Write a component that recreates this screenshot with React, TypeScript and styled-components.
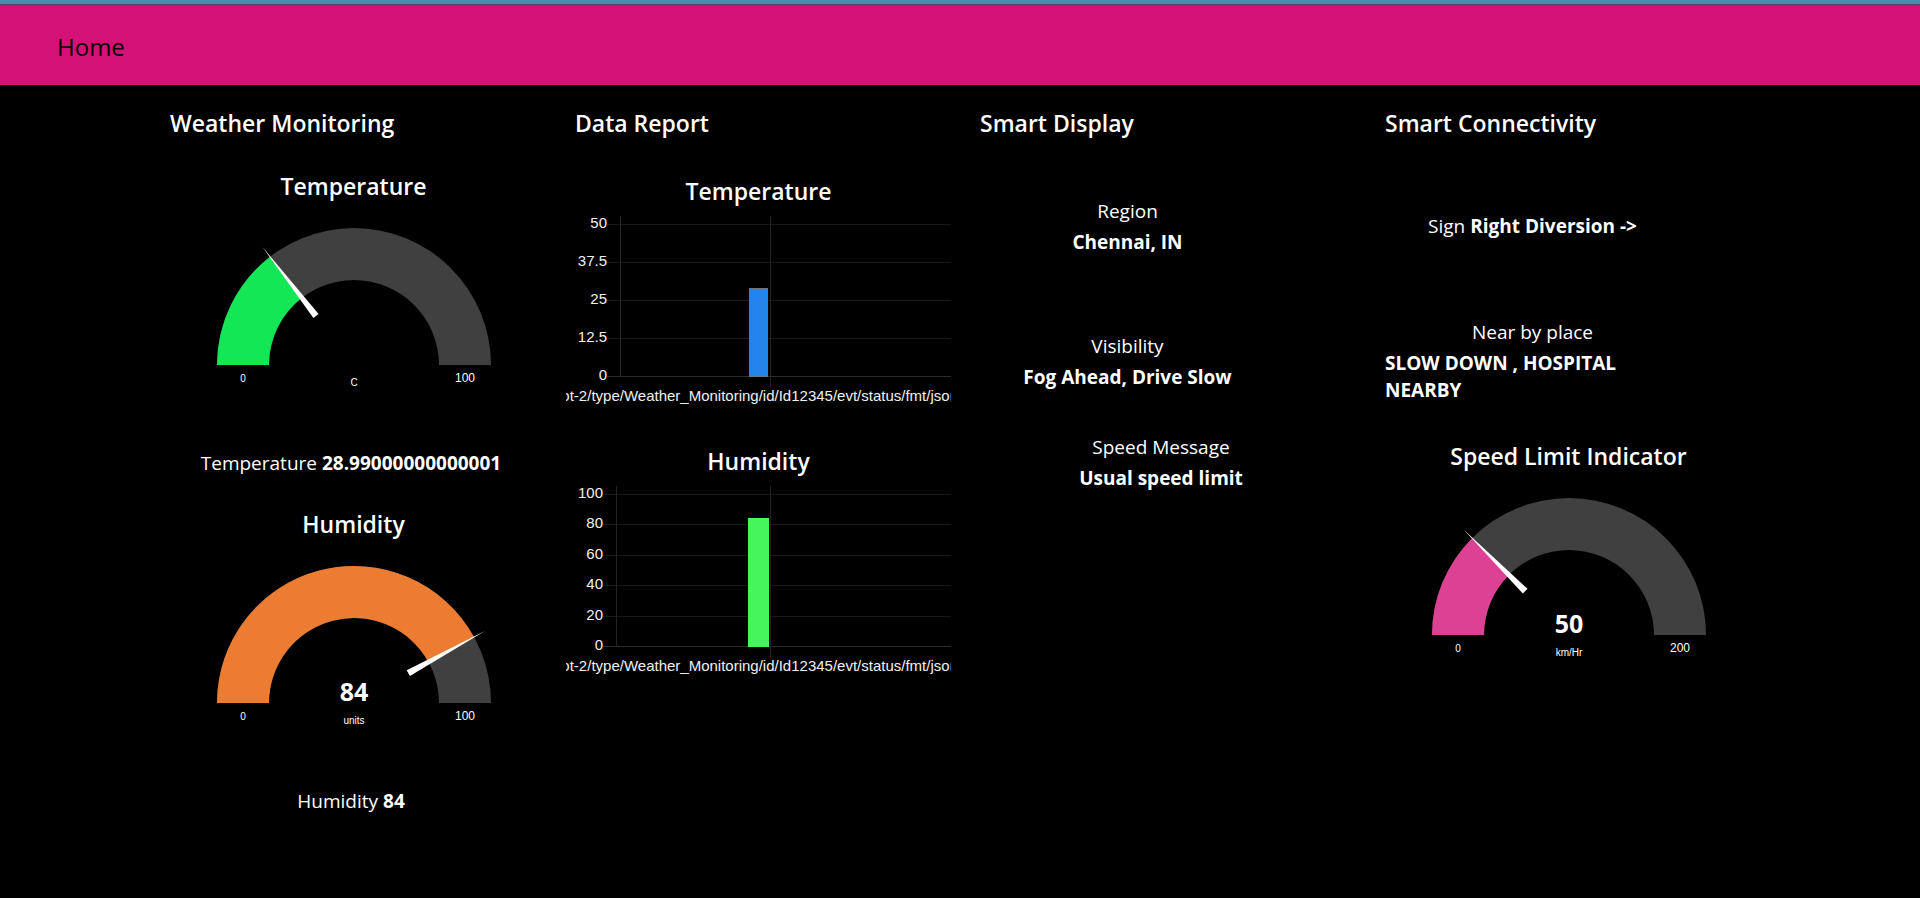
import React from "react";
import styled, { createGlobalStyle } from "styled-components";

const GlobalStyle = createGlobalStyle`
  * { box-sizing: border-box; }
  body {
    margin: 0;
    min-height: 100vh;
    background: #000;
    color: #fff;
    font-family: "Segoe UI", "Open Sans", "Noto Sans", sans-serif;
  }
`;

const Header = styled.header`
  display: flex;
  align-items: center;
  height: 85px;
  padding: 4px 57px 0;
  border-top: 4px solid #448fac;
  background: #d41177;
  box-shadow: inset 0 1px 0 #55485c;
`;

const PageTitle = styled.h1`
  margin: 0;
  color: #080006;
  font-size: 24px;
  font-weight: 400;
  line-height: 32px;
`;

const Main = styled.main`
  display: grid;
  grid-template-columns: repeat(4, minmax(0, 405px));
  justify-content: center;
  padding: 20px 0 24px 2px;
`;

const Column = styled.section`
  display: flex;
  flex-direction: column;
`;

const ColumnTitle = styled.h2`
  margin: 0 0 18px;
  padding-left: 19px;
  font-size: 23px;
  font-weight: 600;
  line-height: 36px;
`;

const Widget = styled.article<{ $rows: number }>`
  display: flex;
  flex-direction: column;
  align-items: center;
  height: ${(p) => Math.ceil(p.$rows * 67.5)}px;
`;

const WidgetTitle = styled.h3<{ $chart?: boolean }>`
  margin: ${(p) => (p.$chart ? "14px 0 0" : "9px 0 0")};
  font-size: 23px;
  font-weight: 600;
  line-height: 36px;
`;

const Reading = styled.dl<{ $rows: number; $narrow?: boolean; $inline?: boolean }>`
  display: flex;
  flex-direction: ${(p) => (p.$inline ? "row" : "column")};
  align-items: center;
  justify-content: center;
  gap: ${(p) => (p.$inline ? "5px" : "4px")};
  width: ${(p) => (p.$narrow ? "295px" : "362px")};
  height: ${(p) => Math.ceil(p.$rows * 67.5)}px;
  margin: 0 0 0 19px;
  font-size: 19px;
  line-height: 27px;
`;

const Label = styled.dt`
  font-weight: 400;
`;

const Value = styled.dd`
  margin: 0;
  font-weight: 700;
`;

const Drawing = styled.svg`
  display: block;
  flex: none;
  font-family: "Liberation Sans", Arial, sans-serif;
  fill: #fff;
`;

const BigValue = styled.text`
  font-family: "Segoe UI", "Open Sans", "Noto Sans", sans-serif;
  font-size: 25px;
  font-weight: 700;
`;

const SmallText = styled.text<{ $size: number }>`
  font-size: ${(p) => p.$size}px;
`;

const AxisText = styled.text`
  font-size: 15px;
  fill: #f0f0f0;
`;

const OUTER = 137;
const INNER = 85;

const ring = (from: number, to: number) => {
  const point = (radius: number, share: number) => {
    const a = Math.PI * share;
    return `${150 - radius * Math.cos(a)} ${150 - radius * Math.sin(a)}`;
  };
  return `M${point(OUTER, from)} A${OUTER} ${OUTER} 0 0 1 ${point(OUTER, to)} L${point(INNER, to)} A${INNER} ${INNER} 0 0 0 ${point(INNER, from)}Z`;
};

type GaugeProps = {
  title: string;
  share: number;
  max: number;
  color: string;
  unit: string;
  value?: string;
};

const Gauge = ({ title, share, max, color, unit, value }: GaugeProps) => (
  <Widget $rows={4}>
    <WidgetTitle>{title}</WidgetTitle>
    <Drawing width="300" height="185" viewBox="0 -11 300 185" role="img" aria-label={`${title} gauge`}>
      <path d={ring(0, 1)} fill="#404040" />
      <path d={ring(0, share)} fill={color} />
      <path d="M0.5 150 L88 146.7 L88 153.3Z" transform={`rotate(${share * 180} 150 150)`} />
      <SmallText $size={10} x="39" y="167" textAnchor="middle">0</SmallText>
      <SmallText $size={12} x="261" y="167" textAnchor="middle">{max}</SmallText>
      {value && <BigValue x="150" y="148" textAnchor="middle">{value}</BigValue>}
      <SmallText $size={10} x="150" y="171" textAnchor="middle">{unit}</SmallText>
    </Drawing>
  </Widget>
);

type ChartProps = {
  title: string;
  ticks: number[];
  left: number;
  bar: { x: number; width: number; height: number; fill: string; stroke: string };
};

const TOPIC = "iot-2/type/Weather_Monitoring/id/Id12345/evt/status/fmt/json";

const BarChart = ({ title, ticks, left, bar }: ChartProps) => {
  const step = 152 / (ticks.length - 1);
  return (
    <Widget $rows={4}>
      <WidgetTitle $chart>{title}</WidgetTitle>
      <Drawing width="385" height="200" viewBox="0 0 385 200" role="img" aria-label={`${title} chart`}>
        {ticks.map((tick, i) => {
          const y = Math.round(15 + i * step);
          return (
            <React.Fragment key={tick}>
              <rect x={left - 13} y={y} width={398 - left} height="1" fill={tick === 0 ? "#2c2c2c" : "#191919"} />
              <AxisText x={left - 13} y={y + 4} textAnchor="end">{tick}</AxisText>
            </React.Fragment>
          );
        })}
        <rect x={left} y="7" width="1" height="161" fill="#232323" />
        <rect x="204" y="7" width="1" height="172" fill="#232323" />
        <rect x={bar.x + 0.5} y={167.5 - bar.height} width={bar.width - 1} height={bar.height} fill={bar.fill} stroke={bar.stroke} />
        <AxisText x="192" y="192" textAnchor="middle">{TOPIC}</AxisText>
      </Drawing>
    </Widget>
  );
};

type TextWidgetProps = {
  label: string;
  value: string;
  rows: number;
  narrow?: boolean;
  inline?: boolean;
};

const TextWidget = ({ label, value, rows, narrow, inline }: TextWidgetProps) => (
  <Reading $rows={rows} $narrow={narrow} $inline={inline}>
    <Label>{label}</Label>
    <Value>{value}</Value>
  </Reading>
);

export default function App() {
  return (
    <>
      <GlobalStyle />
      <Header>
        <PageTitle>Home</PageTitle>
      </Header>
      <Main>
        <Column>
          <ColumnTitle>Weather Monitoring</ColumnTitle>
          <Gauge title="Temperature" share={0.29} max={100} color="#14e755" unit="C" />
          <TextWidget label="Temperature" value="28.99000000000001" rows={1} inline />
          <Gauge title="Humidity" share={0.84} max={100} color="#ec7c32" unit="units" value="84" />
          <TextWidget label="Humidity" value="84" rows={1} inline />
        </Column>
        <Column>
          <ColumnTitle>Data Report</ColumnTitle>
          <BarChart
            title="Temperature"
            ticks={[50, 37.5, 25, 12.5, 0]}
            left={54}
            bar={{ x: 183, width: 19, height: 88, fill: "#2484ee", stroke: "#6c7680" }}
          />
          <BarChart
            title="Humidity"
            ticks={[100, 80, 60, 40, 20, 0]}
            left={50}
            bar={{ x: 182, width: 21, height: 128, fill: "#46f45b", stroke: "#46f45b" }}
          />
        </Column>
        <Column>
          <ColumnTitle>Smart Display</ColumnTitle>
          <TextWidget label="Region" value="Chennai, IN" rows={2} narrow />
          <TextWidget label="Visibility" value="Fog Ahead, Drive Slow" rows={2} narrow />
          <TextWidget label="Speed Message" value="Usual speed limit" rows={1} />
        </Column>
        <Column>
          <ColumnTitle>Smart Connectivity</ColumnTitle>
          <TextWidget label="Sign" value="Right Diversion -&gt;" rows={2} narrow inline />
          <TextWidget label="Near by place" value="SLOW DOWN , HOSPITAL NEARBY" rows={2} narrow />
          <Gauge title="Speed Limit Indicator" share={0.25} max={200} color="#dd4194" unit="km/Hr" value="50" />
        </Column>
      </Main>
    </>
  );
}
